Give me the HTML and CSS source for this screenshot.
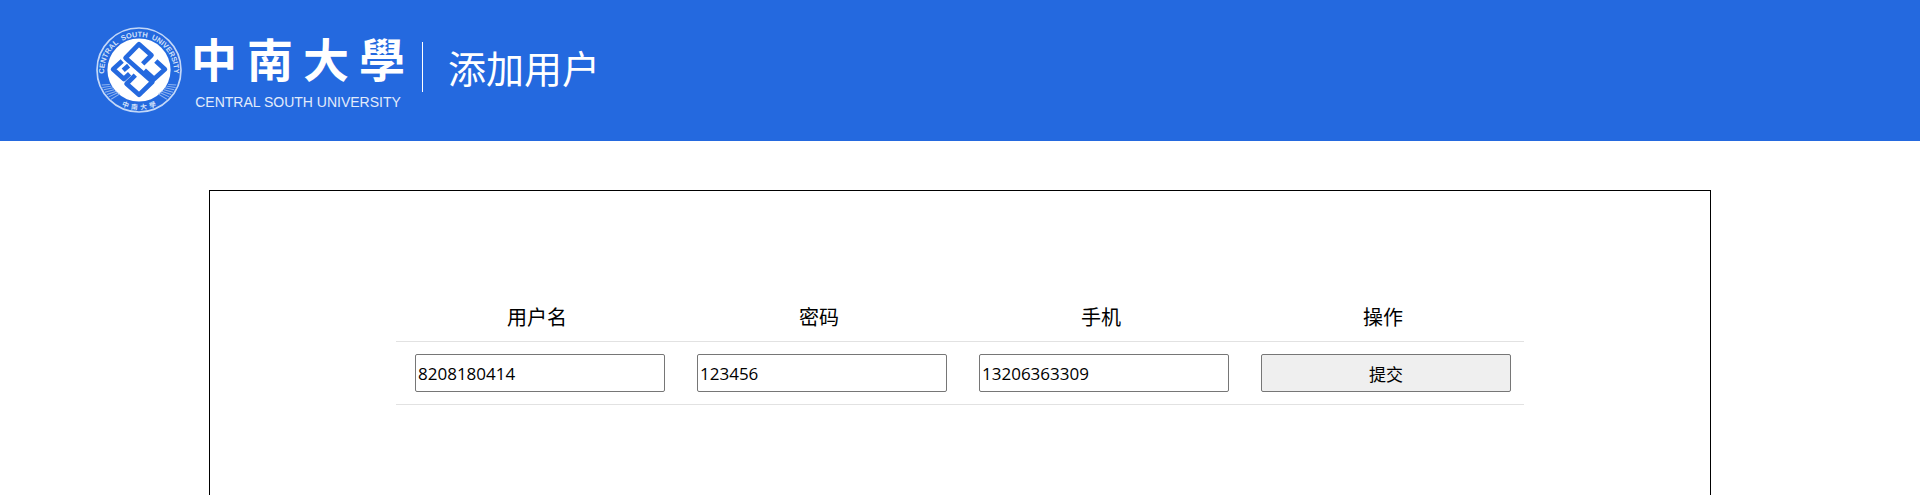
FILE: index.html
```html
<!DOCTYPE html>
<html lang="zh-CN">
<head>
<meta charset="utf-8">
<meta name="viewport" content="width=device-width, initial-scale=1">
<title>添加用户</title>
<link rel="stylesheet" href="styles.css">
</head>
<body>
<header class="header">
  <div class="brand">
    <svg class="emblem" viewBox="49 37 256 256" role="img" aria-label="中南大学校徽">
      <defs>
        <path id="ring-top" d="M80 208 A104 104 0 1 1 274 208"/>
        <path id="ring-bottom" d="M98 253 A118 118 0 0 0 256 253"/>
      </defs>
      <circle class="ring" cx="177" cy="165" r="125"/>
      <circle class="disc" cx="177" cy="165" r="94"/>
      <g class="rays">
        <path d="M66 210 l24 -2 M68 217 l27 -4 M72 224 l28 -6 M76 231 l29 -8 M81 238 l29 -10 M87 245 l28 -13 M94 252 l26 -16"/>
        <path d="M288 210 l-24 -2 M286 217 l-27 -4 M282 224 l-28 -6 M278 231 l-29 -8 M273 238 l-29 -10 M267 245 l-28 -13 M260 252 l-26 -16"/>
      </g>
      <g class="knot">
        <path d="M188 147 L214 121 L177 88 L137 129 L217 200 L177 239 L140 206 L166 180"/>
        <path d="M127 138 L100 163 L132 192 L149 176 M130 166 L146 152"/>
        <path d="M227 138 L254 163 L222 192 L193 166"/>
      </g>
      <text class="ring-text"><textPath href="#ring-top" startOffset="50%" text-anchor="middle">CENTRAL &#160;SOUTH &#160;UNIVERSITY</textPath></text>
      <text class="ring-cjk"><textPath href="#ring-bottom" startOffset="50%" text-anchor="middle">中 &#160;南 &#160;大 &#160;學</textPath></text>
    </svg>
    <div class="wordmark">
      <div class="wordmark-cn"><span>中</span><span>南</span><span>大</span><span>學</span></div>
      <div class="wordmark-en">CENTRAL SOUTH UNIVERSITY</div>
    </div>
  </div>
  <h1 class="title">添加用户</h1>
</header>
<main class="panel">
  <form>
    <table class="table">
      <thead>
        <tr>
          <th scope="col"><label for="username">用户名</label></th>
          <th scope="col"><label for="password">密码</label></th>
          <th scope="col"><label for="phone">手机</label></th>
          <th scope="col">操作</th>
        </tr>
      </thead>
      <tbody>
        <tr>
          <td><input class="field" id="username" type="text" value="8208180414"></td>
          <td><input class="field" id="password" type="text" value="123456"></td>
          <td><input class="field" id="phone" type="text" value="13206363309"></td>
          <td><button class="field submit" type="submit">提交</button></td>
        </tr>
      </tbody>
    </table>
  </form>
</main>
</body>
</html>
```
FILE: styles.css
```css
* { box-sizing: border-box; }

body {
  display: flex;
  flex-direction: column;
  min-height: 100vh;
  margin: 0;
  background: #fff;
  color: #000;
  font-family: "Open Sans", "Noto Sans CJK SC", sans-serif;
}

.header {
  display: flex;
  align-items: flex-start;
  padding: 27px 5% 28px;
  background: #2469df;
  color: #fff;
}

.brand {
  display: flex;
  gap: 4px;
}

.emblem {
  width: 86px;
  height: 86px;
}

.ring { fill: none; stroke: #c4d8f8; stroke-width: 5; }
.disc { fill: #fff; }
.rays { fill: none; stroke: #8fb4f0; stroke-width: 3; }
.knot { fill: none; stroke: #2469df; stroke-width: 14; stroke-linejoin: round; }
.ring-text { fill: #d3e1f9; font: bold 22px "Liberation Sans", sans-serif; }
.ring-cjk { fill: #d3e1f9; font: bold 20px "Noto Sans CJK TC", sans-serif; }

.wordmark {
  display: flex;
  flex-direction: column;
  width: 224px;
}

.wordmark-cn {
  display: grid;
  grid-template-columns: repeat(4, 1fr);
  padding-bottom: 5px;
  font: bold 46px/60px "Noto Sans CJK TC", sans-serif;
  text-align: center;
}

.wordmark-en {
  color: #e2ebfb;
  font: 14px/20px "Liberation Sans", sans-serif;
  text-align: center;
}

.title {
  margin: 15px 0 0 12px;
  padding: 2px 0 0 25px;
  border-left: 1px solid #fff;
  font-size: 38px;
  font-weight: 400;
  line-height: 48px;
}

.panel {
  flex: 1;
  width: 1502px;
  max-width: 100%;
  margin: 49px auto 0;
  padding: 101px 186px 0;
  border: 1px solid #000;
  border-bottom: 0;
}

.table {
  width: 100%;
  table-layout: fixed;
  border-collapse: separate;
  border-spacing: 0;
}

.table th,
.table td {
  border-bottom: 1px solid #e2e2e2;
}

.table th {
  padding: 11px 0 9px;
  font-size: 20px;
  font-weight: 400;
  line-height: 29px;
}

.table td { padding: 12px 13px 12px 19px; }

.field {
  display: block;
  width: 100%;
  height: 38px;
  padding: 1px 2px;
  border: 1px solid #767676;
  border-radius: 2px;
  background: #fff;
  color: #000;
  font-family: inherit;
  font-size: 17px;
}

.submit { background: #efefef; }
```
